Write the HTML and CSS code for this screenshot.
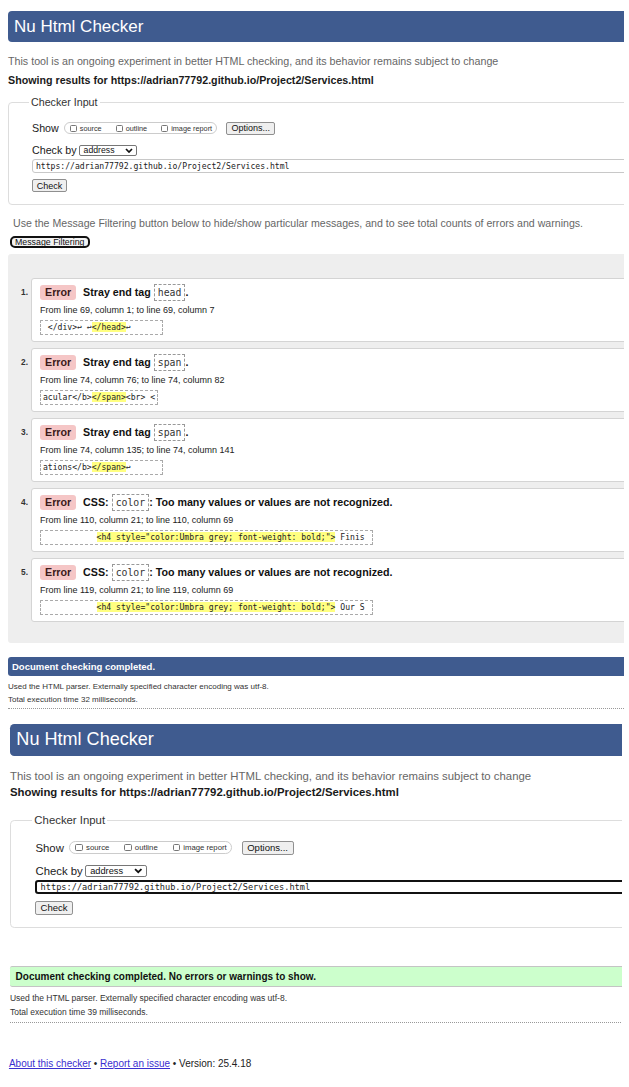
FILE: index.html
```html
<!DOCTYPE html>
<html lang="en">
<head>
<meta charset="utf-8">
<title>Nu Html Checker</title>
<link rel="stylesheet" href="styles.css">
</head>
<body>
<section class="shot shot-1">
  <h1 class="title-bar">Nu Html Checker</h1>
  <p class="lead">This tool is an ongoing experiment in better HTML checking, and its behavior remains subject to change</p>
  <p class="showing">Showing results for https://adrian77792.github.io/Project2/Services.html</p>
  <fieldset class="checker-input">
    <legend>Checker Input</legend>
    <div class="row">
      <span class="lbl">Show</span>
      <span class="opt-group">
        <span class="opt"><span class="cb"></span>source</span>
        <span class="opt"><span class="cb"></span>outline</span>
        <span class="opt"><span class="cb"></span>image report</span>
      </span>
      <span class="btn btn-options">Options...</span>
    </div>
    <div class="row row-checkby">
      <span class="lbl">Check by</span>
      <span class="select">address<svg class="chev" viewBox="0 0 8 5" width="8" height="5"><path d="M1 1 L4 4 L7 1"/></svg></span>
    </div>
    <div class="url">https://adrian77792.github.io/Project2/Services.html</div>
    <span class="btn btn-check">Check</span>
  </fieldset>
  <p class="filter-note">Use the Message Filtering button below to hide/show particular messages, and to see total counts of errors and warnings.</p>
  <span class="btn-filter">Message Filtering</span>
  <div class="results">
    <ol class="messages">
      <li class="msg">
        <span class="num">1.</span>
        <div class="card">
          <p class="msg-head"><span class="badge">Error</span> Stray end tag <code class="tag">head</code>.</p>
          <p class="loc">From line 69, column 1; to line 69, column 7</p>
          <code class="extract"> &lt;/div&gt;↩ ↩<mark>&lt;/head&gt;</mark>↩      </code>
        </div>
      </li>
      <li class="msg">
        <span class="num">2.</span>
        <div class="card">
          <p class="msg-head"><span class="badge">Error</span> Stray end tag <code class="tag">span</code>.</p>
          <p class="loc">From line 74, column 76; to line 74, column 82</p>
          <code class="extract">acular&lt;/b&gt;<mark>&lt;/span&gt;</mark>&lt;br&gt; &lt;</code>
        </div>
      </li>
      <li class="msg">
        <span class="num">3.</span>
        <div class="card">
          <p class="msg-head"><span class="badge">Error</span> Stray end tag <code class="tag">span</code>.</p>
          <p class="loc">From line 74, column 135; to line 74, column 141</p>
          <code class="extract">ations&lt;/b&gt;<mark>&lt;/span&gt;</mark>↩      </code>
        </div>
      </li>
      <li class="msg">
        <span class="num">4.</span>
        <div class="card">
          <p class="msg-head"><span class="badge">Error</span> CSS: <code class="tag">color</code>: Too many values or values are not recognized.</p>
          <p class="loc">From line 110, column 21; to line 110, column 69</p>
          <code class="extract">           <mark>&lt;h4 style="color:Umbra grey; font-weight: bold;"&gt;</mark> Finis </code>
        </div>
      </li>
      <li class="msg">
        <span class="num">5.</span>
        <div class="card">
          <p class="msg-head"><span class="badge">Error</span> CSS: <code class="tag">color</code>: Too many values or values are not recognized.</p>
          <p class="loc">From line 119, column 21; to line 119, column 69</p>
          <code class="extract">           <mark>&lt;h4 style="color:Umbra grey; font-weight: bold;"&gt;</mark> Our S </code>
        </div>
      </li>
    </ol>
  </div>
  <p class="done-bar">Document checking completed.</p>
  <div class="stats">
    <p>Used the HTML parser. Externally specified character encoding was utf-8.</p>
    <p>Total execution time 32 milliseconds.</p>
  </div>
</section>

<section class="shot shot-2">
  <h1 class="title-bar">Nu Html Checker</h1>
  <p class="lead">This tool is an ongoing experiment in better HTML checking, and its behavior remains subject to change</p>
  <p class="showing">Showing results for https://adrian77792.github.io/Project2/Services.html</p>
  <fieldset class="checker-input">
    <legend>Checker Input</legend>
    <div class="row">
      <span class="lbl">Show</span>
      <span class="opt-group">
        <span class="opt"><span class="cb"></span>source</span>
        <span class="opt"><span class="cb"></span>outline</span>
        <span class="opt"><span class="cb"></span>image report</span>
      </span>
      <span class="btn btn-options">Options...</span>
    </div>
    <div class="row row-checkby">
      <span class="lbl">Check by</span>
      <span class="select">address<svg class="chev" viewBox="0 0 8 5" width="8" height="5"><path d="M1 1 L4 4 L7 1"/></svg></span>
    </div>
    <div class="url url-focus">https://adrian77792.github.io/Project2/Services.html</div>
    <span class="btn btn-check">Check</span>
  </fieldset>
  <p class="ok-bar">Document checking completed. No errors or warnings to show.</p>
  <div class="stats">
    <p>Used the HTML parser. Externally specified character encoding was utf-8.</p>
    <p>Total execution time 39 milliseconds.</p>
  </div>
  <p class="footer"><a href="#">About this checker</a> • <a href="#">Report an issue</a> • Version: 25.4.18</p>
</section>
</body>
</html>
```

FILE: styles.css
```css
* {
  box-sizing: border-box;
}

body {
  margin: 0;
  font-family: "Liberation Sans", Arial, sans-serif;
  color: #222;
  background: #fff;
}

p {
  margin: 0;
}

.shot {
  overflow: hidden;
}

.shot-1 {
  width: 624px;
  padding: 11px 0 0 8px;
}

.shot-2 {
  zoom: 1.063;
  width: 585px;
  padding: 14px 0 40px 9.4px;
}

/* header */
.title-bar {
  margin: 0 -14px 0 0;
  height: 31px;
  padding-left: 6px;
  background: #3f5b8f;
  border-radius: 4px;
  color: #fff;
  font-size: 17px;
  font-weight: normal;
  line-height: 31px;
}

.shot-2 .title-bar {
  height: 30px;
  line-height: 30px;
}

.lead {
  margin-top: 12px;
  font-size: 10.7px;
  line-height: 14px;
  color: #666;
}

.showing {
  margin-top: 5px;
  font-size: 10.7px;
  line-height: 14px;
  font-weight: bold;
  color: #1a1a1a;
}

.shot-2 .showing {
  margin-top: 1.5px;
}

/* checker input */
.checker-input {
  margin: 8px -14px 0 0;
  padding: 12px 0 12px 23px;
  min-width: 0;
  border: 1px solid #ddd;
  border-radius: 4px;
}

.shot-2 .checker-input {
  margin-top: 12px;
}

.checker-input legend {
  margin-left: -3px;
  padding: 0 2px;
  font-size: 10.7px;
  line-height: 14px;
  color: #333;
}

.row {
  display: flex;
  align-items: center;
  height: 14px;
  font-size: 10.7px;
  color: #222;
}

.row-checkby {
  margin-top: 8px;
}

.opt-group {
  display: inline-flex;
  align-items: center;
  height: 12px;
  margin-left: 5px;
  padding: 0 4px 0 5px;
  border: 1px solid #ccc;
  border-radius: 6px;
}

.opt {
  display: inline-flex;
  align-items: center;
  margin-right: 14px;
  font-size: 7.3px;
  color: #333;
}

.opt:last-child {
  margin-right: 0;
}

.cb {
  width: 7px;
  height: 7px;
  margin-right: 3px;
  border: 1px solid #777;
  border-radius: 1.5px;
  background: #fff;
}

.btn {
  display: inline-flex;
  align-items: center;
  justify-content: center;
  height: 13px;
  border: 1px solid #8f8f8f;
  border-radius: 2px;
  background: #efefef;
  font-size: 9px;
  color: #111;
}

.btn-options {
  width: 49px;
  margin-left: 9px;
}

.btn-check {
  display: flex;
  width: 35px;
  margin-top: 6px;
}

.select {
  display: flex;
  align-items: center;
  justify-content: space-between;
  width: 58px;
  height: 11px;
  margin-left: 2px;
  padding: 0 3px 0 4px;
  border: 1px solid #767676;
  border-radius: 2px;
  background: #fff;
  font-size: 8.7px;
  color: #111;
}

.chev path {
  fill: none;
  stroke: #111;
  stroke-width: 1.7;
}

.url {
  height: 14px;
  margin: 2px -14px 0 0;
  padding-left: 3px;
  border: 1px solid #c8c8c8;
  border-radius: 3px;
  font: 8.1px/12px "DejaVu Sans Mono", "Liberation Mono", monospace;
  color: #222;
  white-space: nowrap;
}

.url-focus {
  margin-top: 1px;
  padding-left: 3px;
  border: 2px solid #111;
  line-height: 10px;
}

/* filtering */
.filter-note {
  margin: 11px 0 0 5px;
  font-size: 10.6px;
  line-height: 14px;
  color: #666;
}

.btn-filter {
  display: flex;
  align-items: center;
  width: 80px;
  height: 12px;
  margin: 6px 0 0 2px;
  padding-left: 3px;
  border: 2px solid #111;
  border-radius: 5px;
  background: #f3f3f3;
  font-size: 8.8px;
  color: #111;
}

/* results */
.results {
  margin: 6px -14px 0 0;
  padding: 24px 0 21px 6px;
  background: #eee;
  border-radius: 3px;
}

.messages {
  display: flex;
  flex-direction: column;
  gap: 6px;
  margin: 0;
  padding: 0;
  list-style: none;
}

.msg {
  display: flex;
}

.num {
  flex: none;
  width: 17px;
  margin-top: 7px;
  padding-right: 3px;
  text-align: right;
  font-size: 8.3px;
  font-weight: bold;
  line-height: 15px;
  color: #333;
}

.card {
  flex: 1;
  height: 64px;
  padding: 5px 8px 6px;
  background: #fff;
  border: 1px solid #d4d4d4;
  border-radius: 3px;
}

.msg-head {
  height: 17px;
  font-size: 10.7px;
  font-weight: bold;
  line-height: 17px;
  color: #111;
  white-space: nowrap;
}

.badge {
  display: inline-block;
  vertical-align: top;
  height: 15px;
  margin-top: 1px;
  margin-right: 4px;
  padding: 0 5px;
  background: #f5c6c6;
  border-radius: 3px;
  line-height: 15px;
  color: #3b1a1a;
}

.tag {
  display: inline-block;
  vertical-align: top;
  height: 17px;
  padding: 0 3px;
  border: 1px dashed #999;
  background: #fff;
  font: normal 9.8px/15px "DejaVu Sans Mono", "Liberation Mono", monospace;
  color: #333;
}

.loc {
  margin-top: 3px;
  font-size: 9px;
  line-height: 12px;
  color: #222;
}

.extract {
  display: block;
  width: fit-content;
  height: 15px;
  margin-top: 4px;
  padding: 0 2px;
  border: 1px dashed #aaa;
  font: 8.1px/13px "DejaVu Sans Mono", "Liberation Mono", monospace;
  color: #222;
  white-space: pre;
}

mark {
  background: #ffff80;
  color: inherit;
}

/* summary */
.done-bar {
  height: 19px;
  margin: 14px -14px 0 0;
  padding-left: 4px;
  background: #3f5b8f;
  border-radius: 3px;
  color: #fff;
  font-size: 9.5px;
  font-weight: bold;
  line-height: 19px;
}

.ok-bar {
  height: 20px;
  margin: 35px -14px 0 0;
  padding-left: 5.3px;
  background: #ccffcc;
  border-top: 1px solid #c4c4c4;
  border-bottom: 1px solid #c4c4c4;
  border-radius: 2px;
  color: #111;
  font-size: 9.4px;
  font-weight: bold;
  line-height: 18px;
}

.stats {
  margin: 4px -14px 0 0;
  padding-bottom: 2px;
  border-bottom: 1px dotted #999;
  font-size: 8px;
  line-height: 13px;
  color: #333;
}

.shot-2 .stats {
  margin-top: 5px;
}

.footer {
  margin: 32px 0 0 -1px;
  font-size: 9.4px;
  line-height: 14px;
  color: #222;
}

.footer a {
  color: #3b2fd0;
}
```
